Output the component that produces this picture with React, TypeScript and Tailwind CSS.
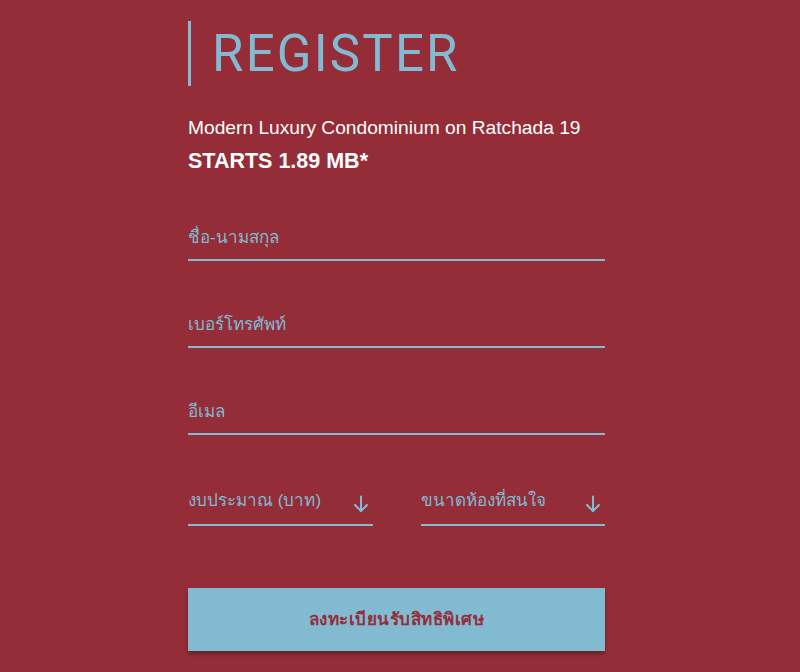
import React from "react";

function Arrow() {
  return (
    <svg width="16" height="18" viewBox="0 0 16 18" fill="none" stroke="#82bad2" strokeWidth="2" strokeLinecap="round">
      <path d="M8 1.5 V16" />
      <path d="M2 10 L8 16 L14 10" />
    </svg>
  );
}

function Field({ label }: { label: string }) {
  return (
    <div className="flex flex-col">
      <div className="h-[30px] text-[17px] leading-[30px] text-[#82bad2]">{label}</div>
      <div className="mt-[6px] h-[2px] bg-[#82bad2]" />
    </div>
  );
}

export default function App() {
  return (
    <div className="min-h-[672px] w-full bg-[#952d38]" style={{ fontFamily: "'Liberation Sans', 'Noto Sans', sans-serif" }}>
      <div className="ml-[188px] w-[417px] pt-[21px]">
        <div className="flex items-center border-l-[3px] border-[#82bad2] h-[65px] pl-[21px]">
          <span className="text-[51px] leading-none text-[#82bad2] font-normal tracking-[2.2px]" style={{ fontFamily: "Roboto, 'Liberation Sans', sans-serif" }}>
            REGISTER
          </span>
        </div>
        <div className="mt-[30px] text-[19.2px] leading-[24px] text-white">Modern Luxury Condominium on Ratchada 19</div>
        <div className="mt-[8px] text-[21.5px] leading-[26px] font-bold text-white">STARTS 1.89 MB*</div>
        <div className="mt-[49px] flex flex-col gap-[49px]">
          <Field label="ชื่อ-นามสกุล" />
          <Field label="เบอร์โทรศัพท์" />
          <Field label="อีเมล" />
          <div className="flex justify-between mt-[2px]">
            <div className="w-[185px] flex flex-col">
              <div className="h-[30px] flex items-center justify-between text-[17px] text-[#82bad2]">
                <span>งบประมาณ (บาท)</span>
                <span className="mt-[6px] mr-[4px]"><Arrow /></span>
              </div>
              <div className="mt-[8px] h-[2px] bg-[#82bad2]" />
            </div>
            <div className="w-[184px] flex flex-col">
              <div className="h-[30px] flex items-center justify-between text-[17px] text-[#82bad2]">
                <span>ขนาดห้องที่สนใจ</span>
                <span className="mt-[6px] mr-[4px]"><Arrow /></span>
              </div>
              <div className="mt-[8px] h-[2px] bg-[#82bad2]" />
            </div>
          </div>
        </div>
        <button className="mt-[62px] w-full h-[63px] bg-[#82bad2] text-[#952d38] text-[17px] font-bold tracking-[0.5px] shadow-[0_3px_4px_rgba(0,0,0,0.3)]">
          ลงทะเบียนรับสิทธิพิเศษ
        </button>
      </div>
    </div>
  );
}
